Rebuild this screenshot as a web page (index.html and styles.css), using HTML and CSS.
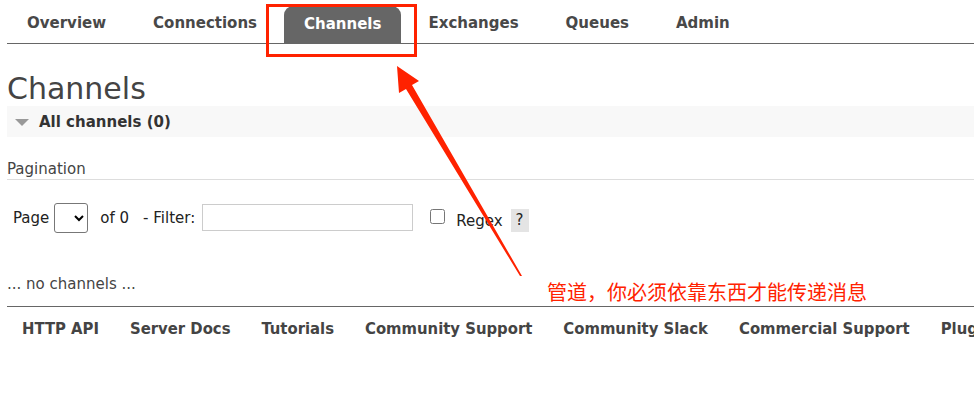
FILE: index.html
```html
<!DOCTYPE html>
<html>
	<head>
		<title>RabbitMQ Management - Channels</title>
		<link rel="stylesheet" href="styles.css">
	</head>
	<body>
		<div class="page">
			<ul class="tabs">
				<li>Overview</li>
				<li>Connections</li>
				<li class="active">Channels</li>
				<li>Exchanges</li>
				<li>Queues</li>
				<li>Admin</li>
			</ul>
			<div class="main">
				<h1>Channels</h1>
				<div class="section">
					<span class="arrow"></span>
					<b>All channels (0)</b>
				</div>
				<h3 class="pagination">Pagination</h3>
				<div class="filters">
					<span>Page</span>
					<select class="pager"><option></option></select>
					<span class="of">of 0</span>
					<span>- Filter:</span>
					<input type="text" class="filter">
					<input type="checkbox" class="regex">
					<span class="regex-label">Regex</span>
					<span class="help">?</span>
				</div>
				<p class="empty">... no channels ...</p>
			</div>
			<ul class="footer">
				<li>HTTP API</li>
				<li>Server Docs</li>
				<li>Tutorials</li>
				<li>Community Support</li>
				<li>Community Slack</li>
				<li>Commercial Support</li>
				<li>Plugins</li>
			</ul>
		</div>

		<div class="note-box"></div>
		<svg class="note-arrow" viewBox="0 0 974 397">
			<polygon points="397,66 419,81 412,85 522,276 520,276 406,89 399,93" fill="#ff2200" />
		</svg>
		<div class="note-text">管道，你必须依靠东西才能传递消息</div>
	</body>
</html>
```

FILE: styles.css
```css
body {
	margin: 0;
	font-family: "DejaVu Sans", Verdana, sans-serif;
	color: #484848;
	overflow: hidden;
}

.page {
	width: 967px;
	padding-left: 7px;
	overflow: hidden;
}

.tabs {
	list-style: none;
	margin: 6px 0 0 0;
	padding: 0;
	display: flex;
	gap: 7px;
	border-bottom: 1px solid #666;
	height: 37px;
}

.tabs li {
	padding: 0 20px;
	font-weight: bold;
	font-size: 15px;
	line-height: 34px;
	color: #484848;
	border-radius: 9px 9px 0 0;
}

.tabs li.active {
	background-color: #666;
	color: #fff;
	line-height: 37px;
}

.main {
	padding-top: 28px;
}

h1 {
	margin: 0;
	font-weight: normal;
	font-size: 30px;
	line-height: 34px;
	color: #444;
}

.section {
	background-color: #f8f8f8;
	height: 31px;
	display: flex;
	align-items: center;
	font-size: 15px;
	color: #333;
}

.section .arrow {
	width: 0;
	height: 0;
	border-left: 7px solid transparent;
	border-right: 7px solid transparent;
	border-top: 7px solid #999;
	margin: 2px 10px 0 8px;
}

.pagination {
	margin: 22px 0 0 0;
	font-weight: normal;
	font-size: 15px;
	line-height: 20px;
	padding-bottom: 0;
	border-bottom: 1px solid #ddd;
	color: #444;
}

.filters {
	display: flex;
	align-items: center;
	font-size: 15px;
	color: #222;
	padding: 22px 0 0 6px;
	height: 31px;
	white-space: nowrap;
}

.pager {
	width: 34px;
	height: 30px;
	margin: 0 12px 0 5px;
	border: 1px solid #777;
	border-radius: 3px;
	background: #fff;
}

.of {
	margin-right: 14px;
}

.filter {
	width: 207px;
	height: 23px;
	margin: 0 0 0 7px;
	border: 1px solid #ccc;
	padding: 1px;
}

.regex {
	width: 15px;
	height: 15px;
	margin: 0 11px 3px 17px;
}

.regex-label {
	margin-top: 6px;
}

.help {
	background-color: #e4e4e4;
	margin: 6px 0 0 8px;
	padding: 3px 5px 4px;
	line-height: 16px;
}

.empty {
	margin: 41px 0 0 0;
	font-size: 15px;
	line-height: 20px;
	color: #444;
	padding-bottom: 12px;
	border-bottom: 1px solid #666;
}

.footer {
	list-style: none;
	margin: 0;
	padding: 12px 0 0 15px;
	display: flex;
	gap: 31px;
	font-family: "DejaVu Sans Condensed", "Liberation Sans Narrow", sans-serif;
	font-weight: bold;
	font-stretch: condensed;
	font-size: 16.5px;
	color: #444;
	white-space: nowrap;
}

.note-box {
	position: absolute;
	left: 266px;
	top: 4px;
	width: 145px;
	height: 47px;
	border: 3px solid #ff2200;
}

.note-arrow {
	position: absolute;
	left: 0;
	top: 0;
	width: 974px;
	height: 397px;
}

.note-text {
	position: absolute;
	left: 547px;
	top: 280px;
	font-family: "Noto Sans CJK SC", sans-serif;
	font-size: 20px;
	line-height: 24px;
	color: #ff2200;
}
```
